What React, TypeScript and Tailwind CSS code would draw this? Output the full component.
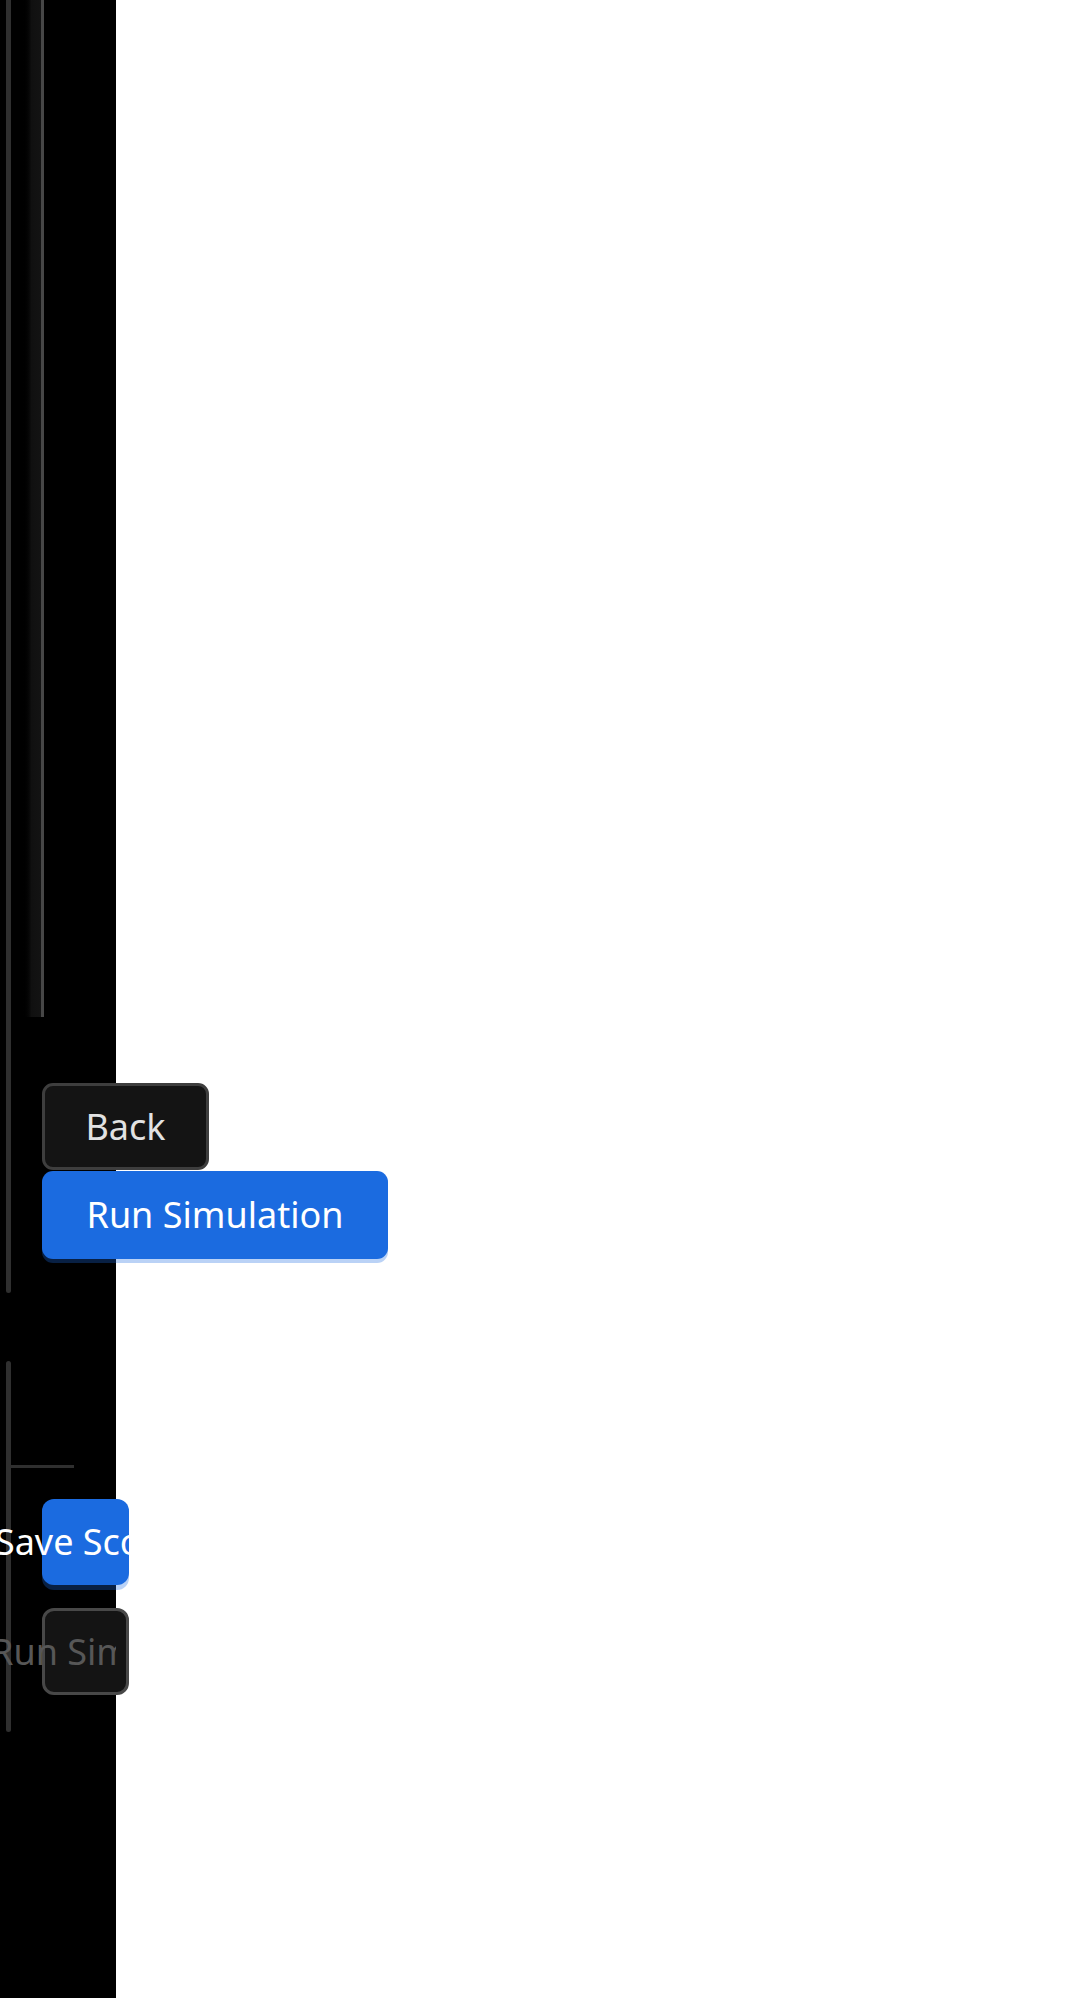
export default function App() {
  return (
    <div className="font-['Noto_Sans',sans-serif] text-[36px] leading-none">
      <div className="w-[116px] h-[1998px] bg-black flex flex-col">
        {/* upper track */}
        <div className="flex h-[1293px] shrink-0">
          <div className="ml-[6px] w-[5px] h-full shrink-0 bg-[#2f2f2f] rounded-b-[3px]" />
          <div className="ml-[11px] flex flex-col shrink-0">
            <div className="w-[22px] h-[1017px] shrink-0 bg-linear-to-r from-black via-[#101010] to-[#131313] border-r-[3px] border-[#474747]" />
            <div className="ml-[20px] mt-[66px] flex flex-col items-start">
              <button className="w-[167px] h-[87px] shrink-0 flex items-center justify-center rounded-[11px] border-[3px] border-[#3e3e3e] bg-[#141414] text-[#e2e2e2]">
                Back
              </button>
              <button className="mt-px w-[346px] h-[88px] shrink-0 flex items-center justify-center rounded-[11px] bg-[#1b6be0] text-white shadow-[0_4px_0_rgba(27,107,224,0.3)]">
                Run Simulation
              </button>
            </div>
          </div>
        </div>

        {/* lower track */}
        <div className="mt-[68px] flex shrink-0">
          <div className="ml-[6px] w-[5px] h-[371px] shrink-0 bg-[#2f2f2f] rounded-[3px]" />
          <div className="flex flex-col shrink-0">
            <div className="mt-[104px] w-[63px] h-[3px] bg-[#2f2f2f]" />
            <div className="ml-[31px] mt-[31px] flex flex-col">
              <button className="w-[87px] h-[86px] shrink-0 flex items-center justify-center rounded-[12px] bg-[#1b6be0] text-white whitespace-nowrap shadow-[0_5px_0_rgba(27,107,224,0.3)]">
                Save Score
              </button>
              <button className="mt-[23px] w-[87px] h-[87px] shrink-0 flex items-center rounded-[12px] border-[3px] border-[#484848] bg-[#141414] text-[#575757]">
                <span className="-ml-[54px] w-[125px] shrink-0 overflow-hidden whitespace-nowrap text-left">
                  Run Simulation
                </span>
              </button>
            </div>
          </div>
        </div>
      </div>
    </div>
  );
}
